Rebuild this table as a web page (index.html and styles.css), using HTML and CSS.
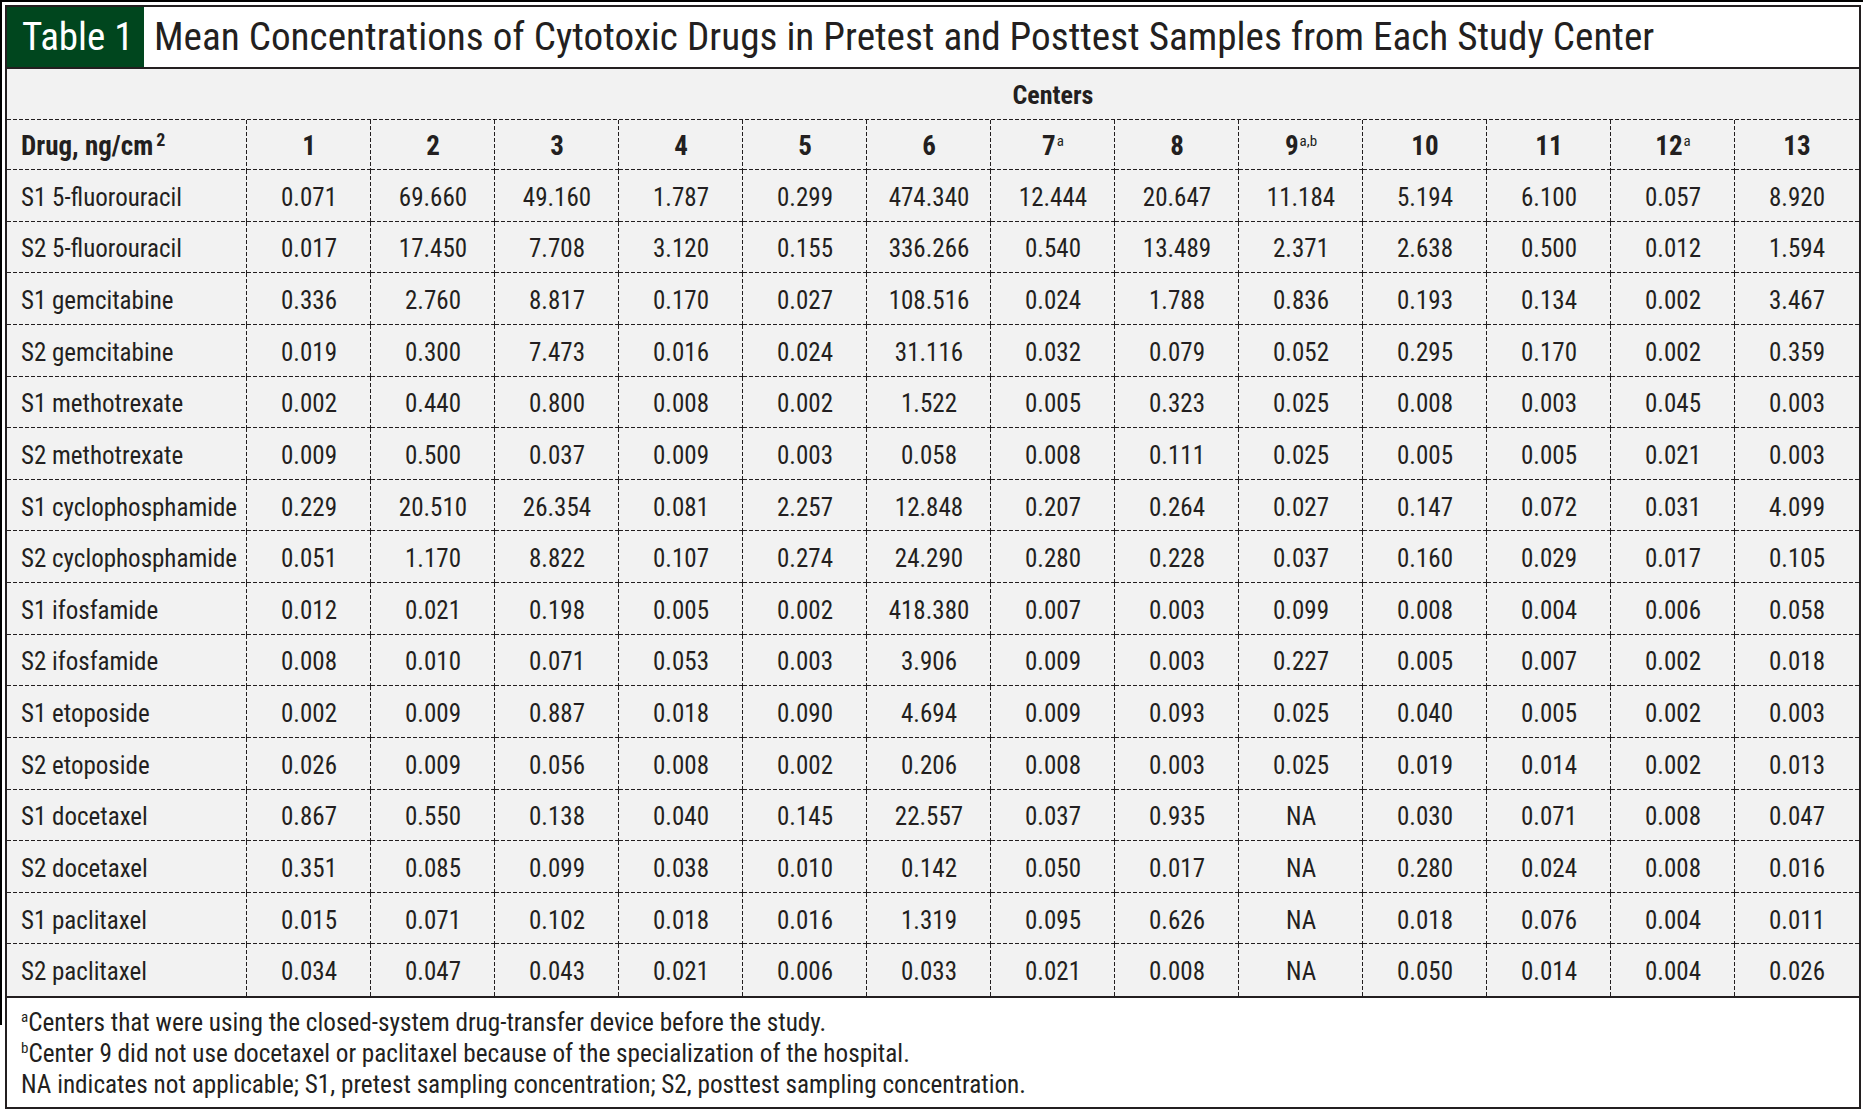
FILE: index.html
```html
<!DOCTYPE html>
<html>
<head>
<meta charset="utf-8">
<link rel="stylesheet" href="styles.css">
</head>
<body>
<div class="page">
  <div class="edge"></div>
  <div class="box">
    <div class="title">
      <div class="label">Table 1</div>
      <div class="caption">Mean Concentrations of Cytotoxic Drugs in Pretest and Posttest Samples from Each Study Center</div>
    </div>
    <table class="data">
      <colgroup><col class="c-drug"></colgroup>
      <thead>
        <tr class="centers"><th></th><th colspan="13">Centers</th></tr>
        <tr class="heads">
          <th class="drug">Drug, ng/cm<sup class="sq">2</sup></th>
          <th>1</th><th>2</th><th>3</th><th>4</th><th>5</th><th>6</th>
          <th>7<sup>a</sup></th><th>8</th><th>9<sup>a,b</sup></th><th>10</th><th>11</th><th>12<sup>a</sup></th><th>13</th>
        </tr>
      </thead>
      <tbody>
        <tr><td>S1 5-fluorouracil</td><td>0.071</td><td>69.660</td><td>49.160</td><td>1.787</td><td>0.299</td><td>474.340</td><td>12.444</td><td>20.647</td><td>11.184</td><td>5.194</td><td>6.100</td><td>0.057</td><td>8.920</td></tr>
        <tr><td>S2 5-fluorouracil</td><td>0.017</td><td>17.450</td><td>7.708</td><td>3.120</td><td>0.155</td><td>336.266</td><td>0.540</td><td>13.489</td><td>2.371</td><td>2.638</td><td>0.500</td><td>0.012</td><td>1.594</td></tr>
        <tr><td>S1 gemcitabine</td><td>0.336</td><td>2.760</td><td>8.817</td><td>0.170</td><td>0.027</td><td>108.516</td><td>0.024</td><td>1.788</td><td>0.836</td><td>0.193</td><td>0.134</td><td>0.002</td><td>3.467</td></tr>
        <tr><td>S2 gemcitabine</td><td>0.019</td><td>0.300</td><td>7.473</td><td>0.016</td><td>0.024</td><td>31.116</td><td>0.032</td><td>0.079</td><td>0.052</td><td>0.295</td><td>0.170</td><td>0.002</td><td>0.359</td></tr>
        <tr><td>S1 methotrexate</td><td>0.002</td><td>0.440</td><td>0.800</td><td>0.008</td><td>0.002</td><td>1.522</td><td>0.005</td><td>0.323</td><td>0.025</td><td>0.008</td><td>0.003</td><td>0.045</td><td>0.003</td></tr>
        <tr><td>S2 methotrexate</td><td>0.009</td><td>0.500</td><td>0.037</td><td>0.009</td><td>0.003</td><td>0.058</td><td>0.008</td><td>0.111</td><td>0.025</td><td>0.005</td><td>0.005</td><td>0.021</td><td>0.003</td></tr>
        <tr><td>S1 cyclophosphamide</td><td>0.229</td><td>20.510</td><td>26.354</td><td>0.081</td><td>2.257</td><td>12.848</td><td>0.207</td><td>0.264</td><td>0.027</td><td>0.147</td><td>0.072</td><td>0.031</td><td>4.099</td></tr>
        <tr><td>S2 cyclophosphamide</td><td>0.051</td><td>1.170</td><td>8.822</td><td>0.107</td><td>0.274</td><td>24.290</td><td>0.280</td><td>0.228</td><td>0.037</td><td>0.160</td><td>0.029</td><td>0.017</td><td>0.105</td></tr>
        <tr><td>S1 ifosfamide</td><td>0.012</td><td>0.021</td><td>0.198</td><td>0.005</td><td>0.002</td><td>418.380</td><td>0.007</td><td>0.003</td><td>0.099</td><td>0.008</td><td>0.004</td><td>0.006</td><td>0.058</td></tr>
        <tr><td>S2 ifosfamide</td><td>0.008</td><td>0.010</td><td>0.071</td><td>0.053</td><td>0.003</td><td>3.906</td><td>0.009</td><td>0.003</td><td>0.227</td><td>0.005</td><td>0.007</td><td>0.002</td><td>0.018</td></tr>
        <tr><td>S1 etoposide</td><td>0.002</td><td>0.009</td><td>0.887</td><td>0.018</td><td>0.090</td><td>4.694</td><td>0.009</td><td>0.093</td><td>0.025</td><td>0.040</td><td>0.005</td><td>0.002</td><td>0.003</td></tr>
        <tr><td>S2 etoposide</td><td>0.026</td><td>0.009</td><td>0.056</td><td>0.008</td><td>0.002</td><td>0.206</td><td>0.008</td><td>0.003</td><td>0.025</td><td>0.019</td><td>0.014</td><td>0.002</td><td>0.013</td></tr>
        <tr><td>S1 docetaxel</td><td>0.867</td><td>0.550</td><td>0.138</td><td>0.040</td><td>0.145</td><td>22.557</td><td>0.037</td><td>0.935</td><td>NA</td><td>0.030</td><td>0.071</td><td>0.008</td><td>0.047</td></tr>
        <tr><td>S2 docetaxel</td><td>0.351</td><td>0.085</td><td>0.099</td><td>0.038</td><td>0.010</td><td>0.142</td><td>0.050</td><td>0.017</td><td>NA</td><td>0.280</td><td>0.024</td><td>0.008</td><td>0.016</td></tr>
        <tr><td>S1 paclitaxel</td><td>0.015</td><td>0.071</td><td>0.102</td><td>0.018</td><td>0.016</td><td>1.319</td><td>0.095</td><td>0.626</td><td>NA</td><td>0.018</td><td>0.076</td><td>0.004</td><td>0.011</td></tr>
        <tr><td>S2 paclitaxel</td><td>0.034</td><td>0.047</td><td>0.043</td><td>0.021</td><td>0.006</td><td>0.033</td><td>0.021</td><td>0.008</td><td>NA</td><td>0.050</td><td>0.014</td><td>0.004</td><td>0.026</td></tr>
      </tbody>
    </table>
    <div class="notes">
      <p><sup>a</sup>Centers that were using the closed-system drug-transfer device before the study.</p>
      <p><sup>b</sup>Center 9 did not use docetaxel or paclitaxel because of the specialization of the hospital.</p>
      <p>NA indicates not applicable; S1, pretest sampling concentration; S2, posttest sampling concentration.</p>
    </div>
  </div>
</div>
</body>
</html>
```
FILE: styles.css
```css
html, body {
  margin: 0;
  padding: 0;
  background: #ffffff;
}
body {
  font-family: "Roboto Condensed", "Liberation Sans Narrow", "DejaVu Sans Condensed", sans-serif;
  color: #231f20;
}
.page {
  box-sizing: border-box;
  width: 1863px;
  border-top: 2px solid #000;
  display: flex;
  align-items: flex-start;
}
.edge {
  width: 2px;
  height: 1023px;
  background: #000;
  flex: none;
}
.box {
  box-sizing: border-box;
  width: 1856px;
  height: 1104px;
  margin: 3px 0 0 3px;
  border: 2px solid #231f20;
  background: #fff;
  display: flex;
  flex-direction: column;
  flex: none;
}
.title {
  display: flex;
  align-items: stretch;
  height: 60px;
  border-bottom: 2px solid #231f20;
  background: #fff;
  flex: none;
}
.label {
  width: 137px;
  background: #00461e;
  color: #fff;
  font-size: 39px;
  line-height: 60px;
  padding-left: 15px;
  box-sizing: border-box;
  white-space: nowrap;
}
.caption {
  font-size: 39.2px;
  line-height: 60px;
  padding-left: 10px;
  white-space: nowrap;
}
.data {
  width: 1852px;
  border-collapse: separate;
  border-spacing: 0;
  table-layout: fixed;
  background: #f2f2f2;
  font-size: 25px;
  border-bottom: 2px solid #231f20;
  flex: none;
}
.c-drug { width: 240px; }
.data th, .data td {
  box-sizing: border-box;
  padding: 0;
  text-align: center;
  white-space: nowrap;
  background-image:
    linear-gradient(to right, #231f20 4px, transparent 4px),
    linear-gradient(to bottom, #231f20 4px, transparent 4px);
  background-size: 6px 1px, 1px 6px;
  background-position: 0 100%, 100% 0;
  background-repeat: repeat-x, repeat-y;
}
.data tr > :last-child {
  background-image: linear-gradient(to right, #231f20 4px, transparent 4px);
  background-size: 6px 1px;
  background-position: 0 100%;
  background-repeat: repeat-x;
}
.data tbody tr:last-child td {
  background-image: linear-gradient(to bottom, #231f20 4px, transparent 4px);
  background-size: 1px 6px;
  background-position: 100% 0;
  background-repeat: repeat-y;
}
.data tbody tr:last-child td:last-child {
  background-image: none;
}
.centers th {
  height: 51px;
  padding-top: 1px;
  font-weight: bold;
  font-size: 26px;
  background-image: linear-gradient(to right, #231f20 4px, transparent 4px);
  background-size: 6px 1px;
  background-position: 0 100%;
  background-repeat: repeat-x;
}
.heads th {
  height: 50px;
  padding-top: 2px;
  font-weight: bold;
  font-size: 27px;
}
.heads th.drug, .data td:first-child {
  text-align: left;
  padding-left: 14px;
}
.data td {
  height: 51.625px;
  padding-top: 3px;
}
.data sup {
  font-size: 15px;
  font-weight: normal;
  vertical-align: 9px;
  line-height: 0;
  margin-left: 1px;
}
.data sup.sq {
  font-weight: bold;
  font-size: 18px;
  margin-left: 3px;
}
.notes {
  padding: 9px 0 0 14px;
  font-size: 25.2px;
}
.notes p {
  margin: 0;
  line-height: 31px;
  white-space: nowrap;
}
.notes sup {
  font-size: 15px;
  vertical-align: 9px;
  line-height: 0;
}
```
